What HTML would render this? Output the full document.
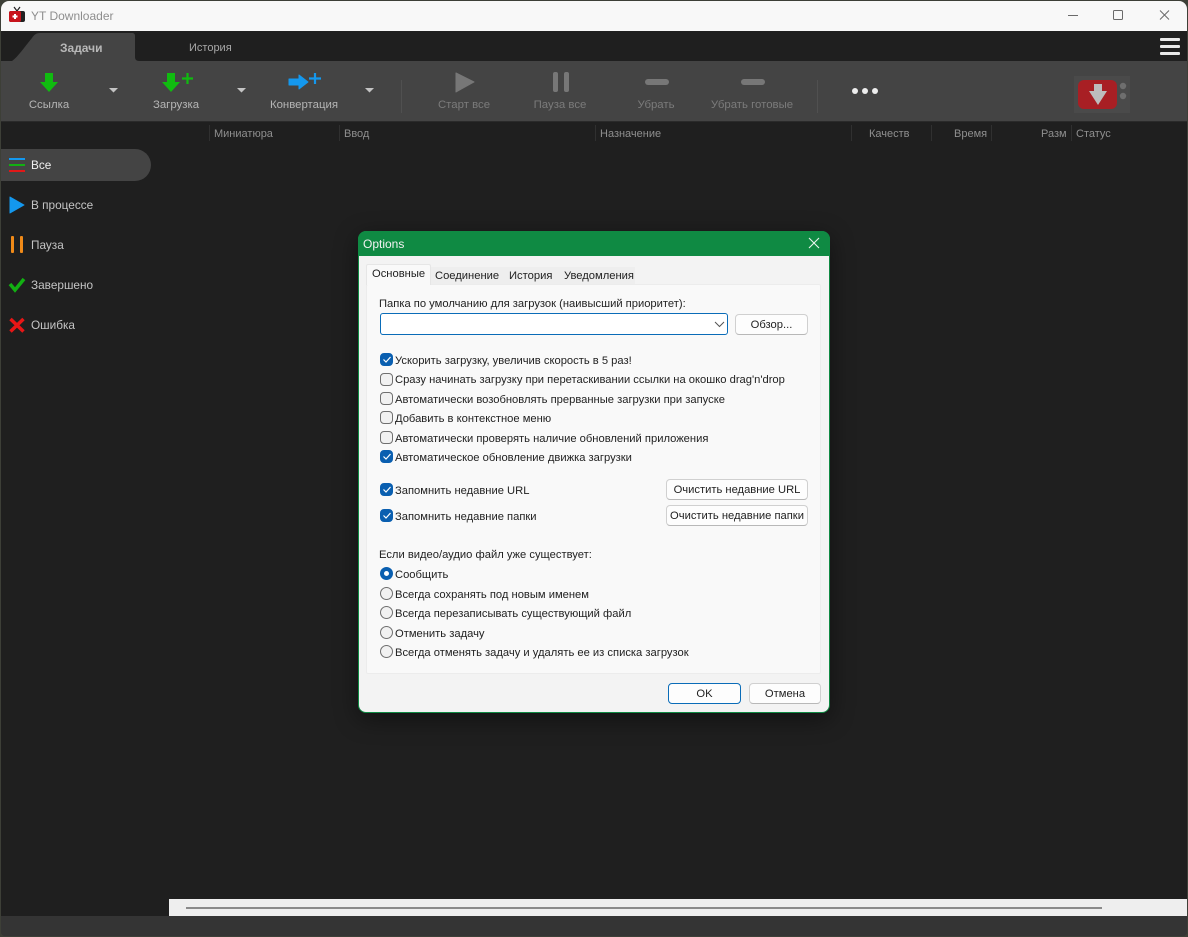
<!DOCTYPE html>
<html><head><meta charset="utf-8"><title>YT Downloader</title>
<style>
html,body{margin:0;padding:0;width:1188px;height:937px;overflow:hidden;background:#3d3f37}
*{box-sizing:border-box}
body{font-family:"Liberation Sans","Noto Sans CJK SC",sans-serif;font-size:11.2px;position:relative}
.a{position:absolute;white-space:nowrap}
.t{position:absolute;white-space:nowrap;line-height:14px;transform:translateX(-50%);font-size:11.4px}
.tb{color:#b5b5b5;top:98px}
.dis{color:#7b7b7b;top:98px}
.h{color:#8f8f8f;top:127px;line-height:14px;position:absolute;white-space:nowrap;font-size:11px}
.sep{position:absolute;top:125px;width:1px;height:16px;background:#303030}
.side{position:absolute;left:31px;color:#c4c4c4;line-height:14px;white-space:nowrap;font-size:11.8px}
.d{color:#222}
.l{position:absolute;left:395px;line-height:14px;color:#222;white-space:nowrap;margin-top:1px}
.cb{position:absolute;left:380px;width:13px;height:13px;border:1px solid #6f6f6f;border-radius:4px;background:#f1f1f1}
.cb.on{background:#0a5fb0;border-color:#0a5fb0}
.rb{position:absolute;left:380px;width:13px;height:13px;border:1px solid #6f6f6f;border-radius:50%;background:#f1f1f1}
.btn{position:absolute;background:#fdfdfd;border:1px solid #d0d0d0;border-bottom-color:#b8b8b8;border-radius:4px;text-align:center;color:#222;line-height:20px;white-space:nowrap}
</style></head><body>

<div style="position:absolute;left:0;top:0;width:1188px;height:937px;background:#3d3f37"></div>

<!-- title bar -->
<div class="a" style="left:1px;top:1px;width:1186px;height:30px;background:#f8f8f8;border-radius:8px 8px 0 0"></div>
<svg class="a" style="left:8px;top:6px" width="18" height="17" viewBox="0 0 18 17">
<path d="M6 1l3 4 3-4" fill="none" stroke="#222" stroke-width="1.2"/>
<rect x="1" y="5" width="16" height="11" rx="2" fill="#222"/>
<rect x="1" y="5" width="12" height="11" rx="2" fill="#c8141c"/>
<rect x="6" y="8" width="2" height="5" fill="#fff"/><rect x="4.500" y="9.500" width="5" height="2" fill="#fff"/>
</svg>
<div class="a" style="left:31px;top:9px;font-size:12px;line-height:14px;color:#8e8e8e">YT Downloader</div>
<svg class="a" style="left:1060px;top:6px" width="120" height="18" viewBox="0 0 120 18" fill="none" stroke="#6a6a6a" stroke-width="1">
<path d="M8 9.500h10"/><rect x="53.500" y="4.500" width="9" height="9" rx="1"/><path d="M100 4.500l9 9M109 4.500l-9 9"/>
</svg>

<!-- dark app -->
<div class="a" style="left:1px;top:31px;width:1186px;height:885px;background:#1f1f1f"></div>

<!-- tabs -->
<svg class="a" style="left:12px;top:33px" width="128" height="29" viewBox="0 0 128 29"><path d="M0 28C6 24 14 12 20 5 22 2 24 0 28 0H120C122 0 123 1 123 3V24C123 26 124 28 127 28Z" fill="#444"/></svg>
<div class="a" style="left:60px;top:41px;font-size:12px;font-weight:bold;line-height:14px;color:#b8b8b8">Задачи</div>
<div class="a" style="left:189px;top:41px;line-height:14px;color:#a8a8a8;font-size:11px">История</div>
<div class="a" style="left:1160px;top:38px;width:20px;height:3px;background:#e8e8e8;border-radius:1px"></div>
<div class="a" style="left:1160px;top:45px;width:20px;height:3px;background:#e8e8e8;border-radius:1px"></div>
<div class="a" style="left:1160px;top:52px;width:20px;height:3px;background:#e8e8e8;border-radius:1px"></div>

<!-- toolbar -->
<div class="a" style="left:1px;top:61px;width:1186px;height:60px;background:#444"></div>
<svg class="a" style="left:0;top:61px" width="1188" height="60" viewBox="0 61 1188 60">
<path d="M45 73h8v9h5L49 92 40 82h5z" fill="#10bb10"/>
<path d="M167 73h8v9h5L171 92 162 82h5z" fill="#10bb10"/>
<path d="M187.500 73v11M182 78.500h11" stroke="#10bb10" stroke-width="2.200" fill="none"/>
<path d="M289 79h10v-4l9 7-9 7v-4h-10z" fill="#1498ee" stroke="#1498ee" stroke-width="1" stroke-linejoin="round"/>
<path d="M315 73v11M309 78.500h12" stroke="#1498ee" stroke-width="2.200" fill="none"/>
<path d="M109 88h9l-4.500 4.500zM237 88h9l-4.500 4.500zM365 88h9l-4.500 4.500z" fill="#c4c4c4"/>
<rect x="401" y="80" width="1" height="33" fill="#505050"/>
<rect x="817" y="80" width="1" height="33" fill="#505050"/>
<path d="M456 73 474 82 456 92Z" fill="#777" stroke="#777" stroke-width="1" stroke-linejoin="round"/>
<rect x="553" y="72" width="5" height="20" rx="2" fill="#777"/><rect x="564" y="72" width="5" height="20" rx="2" fill="#777"/>
<rect x="645" y="79" width="24" height="6" rx="3" fill="#777"/>
<rect x="741" y="79" width="24" height="6" rx="3" fill="#777"/>
<circle cx="855" cy="91" r="3" fill="#eee"/><circle cx="865" cy="91" r="3" fill="#eee"/><circle cx="875" cy="91" r="3" fill="#eee"/>
<rect x="1074" y="76" width="56" height="37" fill="#4a4a4a"/>
<rect x="1078" y="80" width="39" height="29" rx="6" fill="#a81f24"/>
<path d="M1094 84h8v7h5l-9 14-9-14h5z" fill="#bdbdbd"/>
<circle cx="1123" cy="86" r="3.200" fill="#6e6e6e"/><circle cx="1123" cy="96" r="3.200" fill="#6e6e6e"/>
</svg>
<div class="t tb" style="left:49px">Ссылка</div>
<div class="t tb" style="left:176px">Загрузка</div>
<div class="t tb" style="left:304px">Конвертация</div>
<div class="t dis" style="left:464px">Старт все</div>
<div class="t dis" style="left:560px">Пауза все</div>
<div class="t dis" style="left:656px">Убрать</div>
<div class="t dis" style="left:752px">Убрать готовые</div>

<!-- header -->
<div class="a" style="left:1px;top:121px;width:1186px;height:1px;background:#2a2a2a"></div>
<div class="sep" style="left:209px"></div><div class="h" style="left:214px">Миниатюра</div>
<div class="sep" style="left:339px"></div><div class="h" style="left:344px">Ввод</div>
<div class="sep" style="left:595px"></div><div class="h" style="left:600px">Назначение</div>
<div class="sep" style="left:851px"></div><div class="h" style="left:869px">Качеств</div>
<div class="sep" style="left:931px"></div><div class="h" style="left:954px">Время</div>
<div class="sep" style="left:991px"></div><div class="h" style="left:1041px">Разм</div>
<div class="sep" style="left:1071px"></div><div class="h" style="left:1076px">Статус</div>

<!-- sidebar -->
<div class="a" style="left:1px;top:149px;width:150px;height:32px;background:#444;border-radius:0 16px 16px 0"></div>
<svg class="a" style="left:0;top:150px" width="30" height="190" viewBox="0 150 30 190">
<path d="M9 159h16" stroke="#1498ee" stroke-width="2" fill="none"/>
<path d="M9 165h16" stroke="#12b012" stroke-width="2" fill="none"/>
<path d="M9 171h16" stroke="#e01818" stroke-width="2" fill="none"/>
<path d="M10 197 24 205 10 213Z" fill="#1498ee" stroke="#1498ee" stroke-linejoin="round"/>
<rect x="11" y="236" width="3" height="17" rx="1" fill="#f08a18"/><rect x="20" y="236" width="3" height="17" rx="1" fill="#f08a18"/>
<path d="M10 284l5 6 9-11" fill="none" stroke="#12b012" stroke-width="3.500"/>
<path d="M10.500 319l13 12.500M23.500 319l-13 12.500" fill="none" stroke="#e81616" stroke-width="3.500"/>
</svg>
<div class="side" style="top:158px;color:#f0f0f0">Все</div>
<div class="side" style="top:198px">В процессе</div>
<div class="side" style="top:238px">Пауза</div>
<div class="side" style="top:278px">Завершено</div>
<div class="side" style="top:318px">Ошибка</div>

<!-- bottom -->
<div class="a" style="left:169px;top:899px;width:1018px;height:17px;background:#eee"></div>
<div class="a" style="left:186px;top:907px;width:916px;height:2px;background:#8a8a8a"></div>
<div class="a" style="left:1px;top:916px;width:1186px;height:20px;background:#343434;border-radius:0 0 4px 4px"></div>

<!-- dialog -->
<div class="a" style="left:358px;top:231px;width:472px;height:482px;border-radius:8px;background:#f3f3f3;border:1px solid #0f8a43;box-shadow:0 6px 24px rgba(0,0,0,.45)"></div>
<div class="a" style="left:358px;top:231px;width:472px;height:25px;background:#0f8a43;border-radius:8px 8px 0 0"></div>
<div class="a" style="left:363px;top:237px;font-size:12px;line-height:15px;color:#f2f2f2">Options</div>
<svg class="a" style="left:808px;top:237px" width="12" height="12" viewBox="0 0 12 12"><path d="M1 1l10 10M11 1L1 11" stroke="#eaf5ee" stroke-width="1.100" fill="none"/></svg>

<!-- tab page -->
<div class="a" style="left:366px;top:284px;width:455px;height:390px;background:#f9f9f9;border:1px solid #ececec;border-radius:2px"></div>
<div class="a" style="left:431px;top:267px;width:204px;height:17px;background:#eeeeee"></div>
<div class="a" style="left:366px;top:264px;width:65px;height:21px;background:#f9f9f9;border:1px solid #e6e6e6;border-bottom:0;border-radius:2px 2px 0 0"></div>
<div class="a d" style="left:372px;top:267px;line-height:14px">Основные</div>
<div class="a d" style="left:435px;top:269px;line-height:14px">Соединение</div>
<div class="a d" style="left:509px;top:269px;line-height:14px">История</div>
<div class="a d" style="left:564px;top:269px;line-height:14px">Уведомления</div>

<div class="l" style="left:379px;top:296px">Папка по умолчанию для загрузок (наивысший приоритет):</div>
<div class="a" style="left:380px;top:313px;width:348px;height:22px;background:#fff;border:1px solid #0a6cb8;border-radius:3px"></div>
<svg class="a" style="left:714px;top:321px" width="11" height="7" viewBox="0 0 11 7"><path d="M1 1l4.500 4.500L10 1" fill="none" stroke="#555" stroke-width="1"/></svg>
<div class="btn" style="left:735px;top:314px;width:73px;height:21px">Обзор...</div>

<div class="cb on" style="top:353px"></div><div class="l" style="top:353px">Ускорить загрузку, увеличив скорость в 5 раз!</div>
<div class="cb" style="top:373px"></div><div class="l" style="top:372px">Сразу начинать загрузку при перетаскивании ссылки на окошко drag'n'drop</div>
<div class="cb" style="top:392px"></div><div class="l" style="top:392px">Автоматически возобновлять прерванные загрузки при запуске</div>
<div class="cb" style="top:411px"></div><div class="l" style="top:411px">Добавить в контекстное меню</div>
<div class="cb" style="top:431px"></div><div class="l" style="top:431px">Автоматически проверять наличие обновлений приложения</div>
<div class="cb on" style="top:450px"></div><div class="l" style="top:450px">Автоматическое обновление движка загрузки</div>
<div class="cb on" style="top:483px"></div><div class="l" style="top:483px">Запомнить недавние URL</div>
<div class="cb on" style="top:509px"></div><div class="l" style="top:509px">Запомнить недавние папки</div>
<svg class="a" style="left:380px;top:350px" width="14" height="175" viewBox="0 350 14 175">
<g fill="none" stroke="#fff" stroke-width="1.200">
<path d="M3.500 359.500l2.500 2.500 4.500-5"/>
<path d="M3.500 456.500l2.500 2.500 4.500-5"/>
<path d="M3.500 489.500l2.500 2.500 4.500-5"/>
<path d="M3.500 515.500l2.500 2.500 4.500-5"/>
</g></svg>

<div class="btn" style="left:666px;top:479px;width:142px;height:21px">Очистить недавние URL</div>
<div class="btn" style="left:666px;top:505px;width:142px;height:21px">Очистить недавние папки</div>

<div class="l" style="left:379px;top:547px">Если видео/аудио файл уже существует:</div>
<div class="rb" style="top:567px;border:4px solid #0a5fb0;background:#fff"></div><div class="l" style="top:567px">Сообщить</div>
<div class="rb" style="top:587px"></div><div class="l" style="top:587px">Всегда сохранять под новым именем</div>
<div class="rb" style="top:606px"></div><div class="l" style="top:606px">Всегда перезаписывать существующий файл</div>
<div class="rb" style="top:626px"></div><div class="l" style="top:626px">Отменить задачу</div>
<div class="rb" style="top:645px"></div><div class="l" style="top:645px">Всегда отменять задачу и удалять ее из списка загрузок</div>

<div class="btn" style="left:668px;top:683px;width:73px;height:21px;border:1px solid #0a6cb8;border-radius:4px">OK</div>
<div class="btn" style="left:749px;top:683px;width:72px;height:21px">Отмена</div>

</body></html>
